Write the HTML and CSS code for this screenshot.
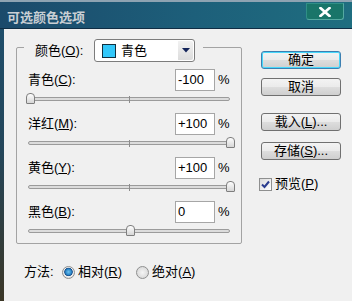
FILE: index.html
```html
<!DOCTYPE html>
<html>
<head>
<meta charset="utf-8">
<link rel="stylesheet" href="styles.css">
</head>
<body>
<div class="win">
  <div class="titlebar">
    <span class="title">可选颜色选项</span>
    <span class="close"><svg width="12" height="10" viewBox="0 0 12 10"><path d="M1.5 1 L10.5 9 M10.5 1 L1.5 9" stroke="#ffffff" stroke-width="2.6" stroke-linecap="square"/></svg></span>
  </div>
  <div class="main">
    <div class="left">
      <div class="group">
        <div class="legend">
          <span class="legend-label">颜色(<u>O</u>):</span>
          <div class="select">
            <span class="swatch"></span>
            <span class="seltext">青色</span>
            <span class="arrow"><svg width="8" height="5" viewBox="0 0 8 5"><path d="M0 0 H8 L4 4.5 Z" fill="#14245a"/></svg></span>
          </div>
        </div>
        <div class="items">
          <div class="item">
            <div class="row"><span class="lbl">青色(<u>C</u>):</span><span class="input">-100</span><span class="pct">%</span></div>
            <div class="slider"><div class="track"></div><span class="tick"></span><div class="rail"><span class="thumb" style="left:0%"></span></div></div>
          </div>
          <div class="item">
            <div class="row"><span class="lbl">洋红(<u>M</u>):</span><span class="input">+100</span><span class="pct">%</span></div>
            <div class="slider"><div class="track"></div><span class="tick"></span><div class="rail"><span class="thumb" style="left:100%"></span></div></div>
          </div>
          <div class="item">
            <div class="row"><span class="lbl">黄色(<u>Y</u>):</span><span class="input">+100</span><span class="pct">%</span></div>
            <div class="slider"><div class="track"></div><span class="tick"></span><div class="rail"><span class="thumb" style="left:100%"></span></div></div>
          </div>
          <div class="item">
            <div class="row"><span class="lbl">黑色(<u>B</u>):</span><span class="input">0</span><span class="pct">%</span></div>
            <div class="slider"><div class="track"></div><span class="tick"></span><div class="rail"><span class="thumb" style="left:50%"></span></div></div>
          </div>
        </div>
      </div>
      <div class="method">
        <span class="method-label">方法:</span>
        <span class="radio on"></span><span class="rlabel">相对(<u>R</u>)</span>
        <span class="radio off"></span><span class="rlabel">绝对(<u>A</u>)</span>
      </div>
    </div>
    <div class="right">
      <div class="btn default">确定</div>
      <div class="btn b-cancel">取消</div>
      <div class="btn b-load">载入(<u>L</u>)...</div>
      <div class="btn b-save">存储(<u>S</u>)...</div>
      <div class="check-row">
        <span class="check"><svg width="11" height="11" viewBox="0 0 11 11"><path d="M2 5.5 L4.5 8 L9 2.5" stroke="#2b3d8f" stroke-width="2" fill="none"/></svg></span>
        <span class="clabel">预览(<u>P</u>)</span>
      </div>
    </div>
  </div>
</div>
</body>
</html>
```

FILE: styles.css
```css
html, body {
  margin: 0;
  padding: 0;
  background: #f0f0f0;
}

.win {
  width: 352px;
  height: 301px;
  display: flex;
  flex-direction: column;
  overflow: hidden;
  font-family: "Liberation Sans", "Noto Sans CJK SC", sans-serif;
  font-size: 13px;
  color: #000;
}

u {
  text-decoration: underline;
  text-underline-offset: 1px;
}

/* title bar */
.titlebar {
  height: 26px;
  flex: none;
  display: flex;
  align-items: flex-start;
  justify-content: space-between;
  border-top: 2px solid #8ea3b2;
  border-bottom: 1px solid #0f2d44;
  background: linear-gradient(to right, #1b4a6b 0%, #1d5f7a 55%, #1f6e80 100%);
}

.title {
  padding-left: 7px;
  padding-top: 8px;
  font-weight: bold;
  font-size: 13px;
  line-height: 14px;
  color: #c9cfd4;
  font-family: "Noto Sans CJK SC", sans-serif;
}

.close {
  width: 38px;
  height: 17px;
  margin-top: 1px;
  margin-right: 8px;
  box-sizing: border-box;
  display: flex;
  align-items: center;
  justify-content: center;
  background: #197569;
  border: 1px solid #2f8f86;
  border-bottom-color: #55a9a1;
  border-right-color: #55a9a1;
  border-radius: 0 0 3px 3px;
}

/* main area */
.main {
  flex: 1;
  display: flex;
  padding-left: 4px;
  background: linear-gradient(#1f4e6a, #24465a 45%, #3b3626) 0 0 / 4px 100% no-repeat, #f0f0f0;
}

.left {
  width: 238px;
  display: flex;
  flex-direction: column;
}

.group {
  margin-left: 12px;
  margin-top: 18px;
  width: 226px;
  height: 197px;
  box-sizing: border-box;
  border: 1px solid #a3a3a3;
  border-radius: 2px;
}

.legend {
  margin-top: -9px;
  margin-left: 7px;
  width: fit-content;
  height: 23px;
  display: flex;
  align-items: center;
  padding-left: 11px;
  padding-right: 8px;
  background: #f0f0f0;
}

.legend-label {
  width: 59px;
  line-height: 16px;
}

.select {
  width: 101px;
  height: 23px;
  box-sizing: border-box;
  border: 1px solid #7c7c7c;
  border-radius: 3px;
  background: #fff;
  display: flex;
  align-items: center;
}

.swatch {
  width: 14px;
  height: 14px;
  box-sizing: border-box;
  margin-left: 7px;
  border: 1px solid #12303f;
  background: #33c8fa;
}

.seltext {
  margin-left: 5px;
  flex: 1;
  line-height: 16px;
}

.arrow {
  width: 15px;
  height: 19px;
  margin-right: 1px;
  display: flex;
  align-items: center;
  justify-content: center;
  background: linear-gradient(#f2f2f2, #dcdcdc);
  border-radius: 0 2px 2px 0;
}

.items {
  margin-top: 7px;
  padding: 0 11px 0 11px;
  display: flex;
  flex-direction: column;
  gap: 4px;
}

.row {
  height: 22px;
  display: flex;
  align-items: center;
}

.lbl {
  flex: 1;
  line-height: 16px;
}

.input {
  width: 40px;
  height: 22px;
  box-sizing: border-box;
  border: 1px solid #a6a6a6;
  background: #fff;
  padding-left: 2px;
  line-height: 20px;
}

.pct {
  width: 12px;
  margin-left: 3px;
  line-height: 16px;
}

.slider {
  height: 18px;
  position: relative;
}

.track {
  position: absolute;
  left: 0;
  right: 0;
  top: 6px;
  height: 4px;
  box-sizing: border-box;
  border: 1px solid #9b9b9b;
  border-radius: 2px;
  background: #dcdcdc;
}

.tick {
  position: absolute;
  left: 101px;
  top: 5px;
  width: 1px;
  height: 7px;
  background: #8c8c8c;
}

.rail {
  position: absolute;
  left: 2px;
  right: 0;
  top: 0;
  height: 18px;
}

.thumb {
  position: absolute;
  top: 2px;
  width: 9px;
  height: 11px;
  margin-left: -4.5px;
  box-sizing: border-box;
  border: 1px solid #7e7e7e;
  border-radius: 4px 4px 1px 1px;
  background: linear-gradient(#fefefe, #d6d6d6);
}

/* method row */
.method {
  margin-top: 19px;
  margin-left: 20px;
  height: 18px;
  display: flex;
  align-items: center;
}

.method-label {
  width: 38px;
  line-height: 16px;
}

.radio {
  width: 13px;
  height: 13px;
  box-sizing: border-box;
  border-radius: 50%;
  border: 1px solid #8e8f8f;
  background: radial-gradient(circle at 50% 50%, #f4f4f4 0, #dcdcdc 70%);
}

.radio.on {
  background: radial-gradient(circle at 50% 45%, #6fc3f0 0, #2a86c8 35%, #174e8a 48%, #f0f0f0 56%, #d8d8d8 80%);
}

.rlabel {
  margin-left: 3px;
  line-height: 16px;
}

.radio.off {
  margin-left: 14px;
}

/* right buttons */
.right {
  margin-left: 19px;
  width: 80px;
  display: flex;
  flex-direction: column;
}

.btn {
  width: 80px;
  height: 18px;
  box-sizing: border-box;
  border: 1px solid #707070;
  border-radius: 3px;
  background: linear-gradient(#f3f3f3 0%, #ebebeb 48%, #dddddd 52%, #cfcfcf 100%);
  display: flex;
  align-items: center;
  justify-content: center;
  line-height: 16px;
}

.btn.default {
  margin-top: 22px;
  border-color: #3c7fb1;
  box-shadow: inset 0 0 0 1px #48d8fb;
}

.b-cancel { margin-top: 9px; }
.b-load { margin-top: 17px; }
.b-save { margin-top: 11px; }

.check-row {
  margin-top: 16px;
  display: flex;
  align-items: center;
  margin-left: -2px;
}

.check {
  width: 13px;
  height: 13px;
  box-sizing: border-box;
  border: 1px solid #8e8f8f;
  background: linear-gradient(135deg, #dcdcdc, #ffffff);
  display: flex;
  align-items: center;
  justify-content: center;
}

.clabel {
  margin-left: 3px;
  line-height: 16px;
}
```
